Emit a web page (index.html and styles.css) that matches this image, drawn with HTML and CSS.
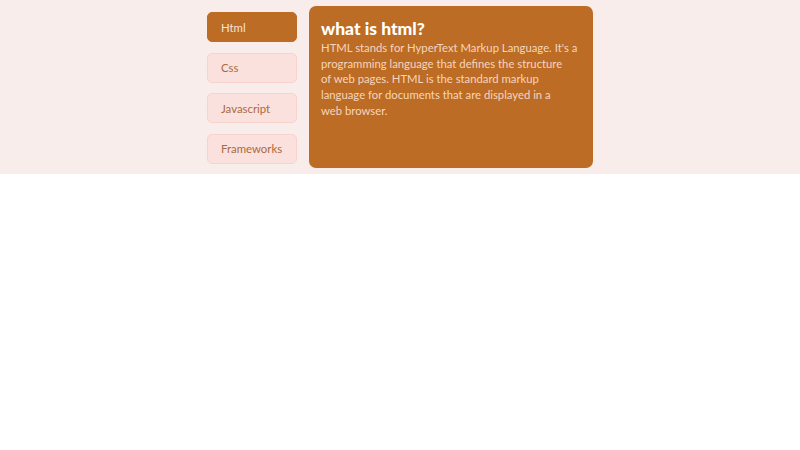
FILE: index.html
```html
<!DOCTYPE html>
<html lang="en">
<head>
<meta charset="utf-8">
<title>Tabs</title>
<link rel="stylesheet" href="styles.css">
</head>
<body>
<section class="tabs-section">
  <nav class="tab-list">
    <button class="tab active">Html</button>
    <button class="tab">Css</button>
    <button class="tab">Javascript</button>
    <button class="tab">Frameworks</button>
  </nav>
  <article class="panel">
    <h2 class="panel-title">what is html?</h2>
    <p class="panel-text">HTML stands for HyperText Markup Language. It's a<br>programming language that defines the structure<br>of web pages. HTML is the standard markup<br>language for documents that are displayed in a<br>web browser.</p>
  </article>
</section>
</body>
</html>
```
FILE: styles.css
```css
* { box-sizing: border-box; }
body {
  margin: 0;
  background: #ffffff;
  font-family: Lato, "Open Sans", sans-serif;
}
.tabs-section {
  background: #f8edeb;
  padding: 6px 0;
  display: flex;
  justify-content: center;
  gap: 12px;
}
.tab-list {
  width: 90px;
  padding-top: 6px;
  display: flex;
  flex-direction: column;
  gap: 10.6px;
}
.tab {
  height: 30px;
  width: 90px;
  text-align: left;
  padding: 0 0 0 13px;
  border: 1px solid #f7d3cb;
  border-radius: 5px;
  background: #fae1dd;
  color: #ab6a42;
  font-family: inherit;
  font-size: 11.4px;
}
.tab.active {
  background: #bc6c25;
  border-color: #bc6c25;
  color: #f8e3d6;
}
.panel {
  width: 284px;
  height: 162px;
  background: #bc6c25;
  border-radius: 7px;
  padding: 12px 12px 12px 12px;
}
.panel-title {
  margin: 0;
  color: #ffffff;
  font-size: 17.5px;
  font-weight: 900;
  line-height: 22px;
}
.panel-text {
  margin: 0;
  color: #f6d5be;
  font-size: 11.3px;
  line-height: 15.7px;
}
```
